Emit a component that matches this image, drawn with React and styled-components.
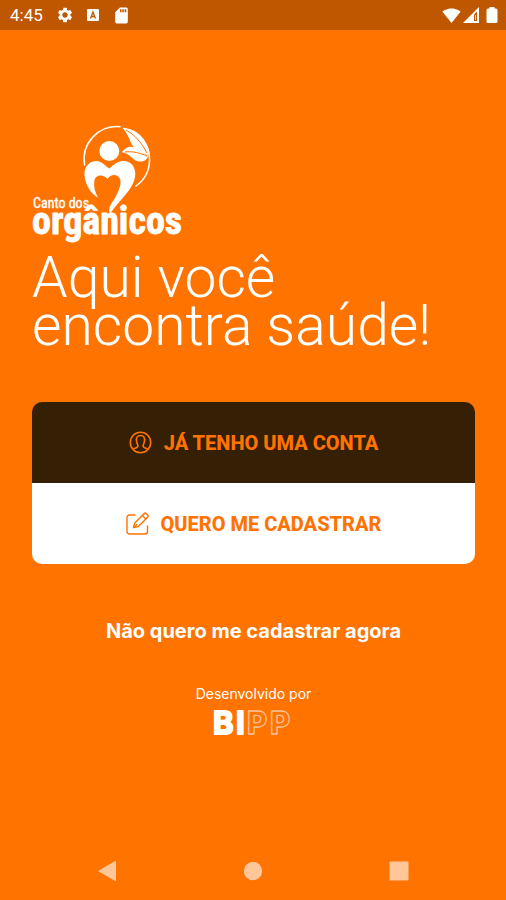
import React from "react";
import styled, { createGlobalStyle, css } from "styled-components";
import { MdSettings, MdSdCard, MdSignalWifi4Bar } from "react-icons/md";

const GlobalStyle = createGlobalStyle`
  * {
    box-sizing: border-box;
  }
  body {
    margin: 0;
    background: #ff7300;
    color: #fff;
    font-family: Roboto, "Liberation Sans", sans-serif;
  }
`;

const Screen = styled.div`
  min-height: 100vh;
  display: flex;
  flex-direction: column;
`;

const StatusBar = styled.header`
  display: flex;
  justify-content: space-between;
  align-items: center;
  height: 30px;
  padding: 0 8px 0 10px;
  background: #bf5600;
`;

const StatusGroup = styled.div`
  display: flex;
  align-items: center;
  gap: ${(props) => props.$gap};
`;

const Clock = styled.span`
  font-size: 17px;
  line-height: 30px;
`;

const Main = styled.main`
  flex: 1;
  display: flex;
  flex-direction: column;
  padding: 94px 31px 0 32px;
`;

const Title = styled.h1`
  margin: 8px 0 0;
  font-family: Roboto, sans-serif;
  font-size: 57px;
  font-weight: 350;
  line-height: 48px;
`;

const Actions = styled.div`
  display: flex;
  flex-direction: column;
  margin-top: 52px;
  border-radius: 10px;
  overflow: hidden;
`;

const buttonStyle = css`
  border: 0;
  padding: 0;
  background: none;
  font-family: Inter, sans-serif;
  font-weight: 700;
  cursor: pointer;
`;

const ActionButton = styled.button`
  ${buttonStyle}
  display: flex;
  justify-content: center;
  align-items: center;
  gap: 12px;
  height: 81px;
  font-family: Roboto, sans-serif;
  font-size: 20px;
  font-weight: 800;
  color: #ff7300;
  background: ${(props) => (props.$dark ? "#352006" : "#fff")};
`;

const SkipButton = styled.button`
  ${buttonStyle}
  align-self: center;
  margin-top: 55px;
  font-size: 20px;
  line-height: 24px;
  color: #fff;
`;

const Credits = styled.footer`
  display: flex;
  flex-direction: column;
  align-items: center;
  margin-top: 41px;
  font-family: Inter, sans-serif;
  font-size: 14px;
  line-height: 20px;
`;

const NavBar = styled.nav`
  display: flex;
  justify-content: space-around;
  align-items: center;
  height: 58px;
  padding: 0 34px;
`;

const NavButton = styled.button`
  ${buttonStyle}
  display: flex;
  color: #ffc799;
`;

const Logo = () => (
  <svg width="152" height="122" viewBox="0 0 152 122" fill="#fff">
    <g fill="none" stroke="#fff" strokeWidth="1.5" strokeLinecap="round">
      <path d="M52.6 41A32.7 32.7 0 0 1 88 2.8" />
      <path d="M104 9A32.7 32.7 0 0 1 104 62" />
    </g>
    <circle cx="77.3" cy="27" r="10" />
    <path d="M90.3 3.7C99 4 107 8 112 16C115 21 117 26 116.6 31C109 29 102 25 99 19C97 13 94 8 90.3 3.7Z" />
    <path d="M89.7 28.3C94 22.5 100 21 105 25C108 28 112 30 116.4 31.5C115 37.5 108 39.5 102 35.5C98 31.5 94 29 89.7 28.3Z" />
    <g fill="none" stroke="#ff7300" strokeWidth="1">
      <path d="M94 6C103 11 109 18 115 29" />
      <path d="M93 28C101 27 108 29 115 32" />
    </g>
    <path d="M78 90C75 84 80 79 83 74C86 68 89 62 88.5 57C87.5 50 79 49 75.5 55C72 50 63.5 50 62.3 57C61.5 63 63 68 66 73.5C59 70 53.5 61 52.5 52C51.5 41 60 35.5 67 37.5C72 39 74 43 77.5 44.5C80 42 84 38 90 37C98 36 103.5 42 103.3 50C103 64 89 74 78 90Z" />
    <g stroke="#fff" strokeLinejoin="round" fontFamily="'Liberation Sans Narrow', 'Roboto Condensed', Lato, sans-serif">
      <text x="1" y="84" fontSize="14" strokeWidth="0.4">
        Canto dos
      </text>
      <text x="0" y="110" fontSize="38" fontWeight="700" strokeWidth="0.8">
        orgânicos
      </text>
    </g>
  </svg>
);

const UserIcon = () => (
  <svg width="23" height="23" viewBox="0 0 23 23" fill="none" stroke="currentColor" strokeWidth="1.6">
    <circle cx="11.5" cy="11.5" r="10.2" />
    <path d="M4.5 18.3C5.5 16.5 9 17.2 9 15C9 14 7.8 12.500 7.500 10C7 6.300 8.500 4.500 11.500 4.500S16 6.300 15.500 10C15.200 12.500 14 14 14 15C14 17.200 17.500 16.500 18.500 18.300" />
  </svg>
);

const EditIcon = () => (
  <svg width="23" height="23" viewBox="0 0 23 23" fill="none" stroke="currentColor" strokeWidth="1.4" strokeLinejoin="round" strokeLinecap="round">
    <path d="M9 3H3.5A2.5 2.5 0 0 0 1 5.5V19.5A2.5 2.5 0 0 0 3.5 22H19A2.5 2.5 0 0 0 21.5 19.5V14" />
    <path d="M7.500 15.500L8.700 11L18 1.700A1.700 1.700 0 0 1 20.400 1.700L21.600 2.900A1.700 1.700 0 0 1 21.600 5.300L12.300 14.600Z" />
    <path d="M16.3 3.4L19.9 7M7.500 15.500L11 12.500" />
  </svg>
);

const BippLogo = () => (
  <svg width="82" height="40" viewBox="0 0 82 40" fontFamily="Inter, sans-serif" fontSize="31" strokeLinejoin="round">
    <g fill="#fff" stroke="#fff" strokeWidth="2" fontWeight="700">
      <text x="0" y="30">B</text>
      <text x="23" y="30">I</text>
    </g>
    <g fill="none" stroke="#ffc194" strokeWidth="1.3" fontWeight="800">
      <text x="34" y="30">P</text>
      <text x="57" y="30">P</text>
    </g>
  </svg>
);

const App = () => {
  return (
    <Screen>
      <GlobalStyle />
      <StatusBar>
        <StatusGroup $gap="13px">
          <Clock>4:45</Clock>
          <MdSettings size={18} />
          <svg width="12" height="12" viewBox="0 0 12 12">
            <rect width="12" height="12" rx="1" fill="#fff" />
            <path d="M3.5 9.5L6 3L8.5 9.5M4.5 7.5H7.5" fill="none" stroke="#bf5600" strokeWidth="1.3" />
          </svg>
          <MdSdCard size={19} />
        </StatusGroup>
        <StatusGroup $gap="2px">
          <MdSignalWifi4Bar size={19} />
          <svg width="16" height="16" viewBox="0 0 16 16">
            <path d="M0 16L16 0V16Z" fill="#fff" />
            <path d="M11 7.5L14 4.5V14H11Z" fill="#bf5600" />
            <path d="M12.5 8V13" stroke="#fff" strokeWidth="0.8" />
          </svg>
          <svg width="17" height="16" viewBox="0 0 17 16">
            <path d="M8.5 0H13.5V1.5H15A1.5 1.5 0 0 1 16.5 3V14.5A1.5 1.5 0 0 1 15 16H7A1.5 1.5 0 0 1 5.5 14.5V3A1.5 1.5 0 0 1 7 1.5H8.5Z" fill="#fff" />
          </svg>
        </StatusGroup>
      </StatusBar>
      <Main>
        <Logo />
        <Title>
          Aqui você
          <br />
          encontra saúde!
        </Title>
        <Actions>
          <ActionButton type="button" $dark>
            <UserIcon />
            JÁ TENHO UMA CONTA
          </ActionButton>
          <ActionButton type="button">
            <EditIcon />
            QUERO ME CADASTRAR
          </ActionButton>
        </Actions>
        <SkipButton type="button">Não quero me cadastrar agora</SkipButton>
        <Credits>
          Desenvolvido por
          <BippLogo />
        </Credits>
      </Main>
      <NavBar>
        <NavButton type="button" aria-label="Voltar">
          <svg width="20" height="22" viewBox="0 0 20 22" fill="currentColor">
            <path d="M1 11L19 0.5V21.5Z" />
          </svg>
        </NavButton>
        <NavButton type="button" aria-label="Início">
          <svg width="20" height="20" viewBox="0 0 20 20" fill="currentColor">
            <circle cx="10" cy="10" r="9.2" />
          </svg>
        </NavButton>
        <NavButton type="button" aria-label="Recentes">
          <svg width="20" height="20" viewBox="0 0 20 20" fill="currentColor">
            <rect x="0.5" y="0.5" width="19" height="19" rx="1" />
          </svg>
        </NavButton>
      </NavBar>
    </Screen>
  );
};

export default App;
